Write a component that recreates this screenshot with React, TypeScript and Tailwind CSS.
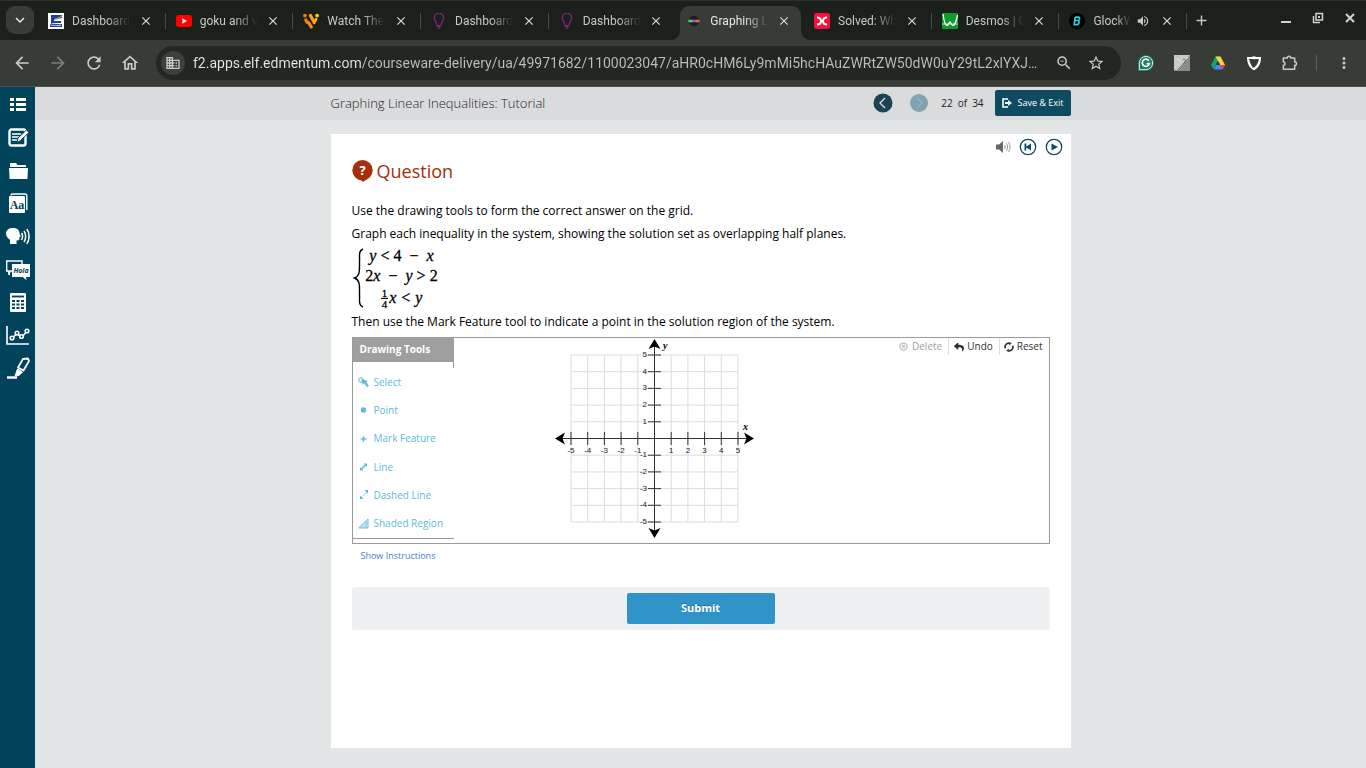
import { useState, type ReactNode } from 'react';
import clsx from 'clsx';
import { MdArrowBack, MdArrowForward, MdClose, MdMoreVert, MdRefresh, MdStarOutline, MdVolumeUp, MdDomain, MdOutlineHome, MdZoomOut, MdAdd, MdExpandMore } from 'react-icons/md';
import { FaReply } from 'react-icons/fa';

interface Tab {
  title: string;
  icon: ReactNode;
  audio?: boolean;
}

function BulbIcon() {
  return (
    <svg className="w-4 h-4" viewBox="0 0 16 16" fill="none" stroke="#7b2a78" strokeWidth="1.2">
      <path d="M6 12.5V11C5.800 9 3.200 8 3.200 5a4.800 4.800 0 0 1 9.600 0c0 3-2.600 4-2.800 6v1.500z" />
      <path d="M6.300 12.800h3.400v1.400H8.800v1.300H7.200v-1.300h-.9z" fill="#7b2a78" strokeWidth="0.500" />
    </svg>
  );
}

const tabs: Tab[] = [
  {
    title: 'Dashboard',
    icon: (
      <svg className="w-4 h-4" viewBox="0 0 16 16">
        <rect width="16" height="16" fill="#fff" />
        <path d="M3 2h11v3L8 6.500H6V8h7v2H5L3 11z" fill="#1d3f9c" />
        <path d="M2 11.500c4-2 8 .5 12-.5v3H2z" fill="#1d3f9c" />
        <path d="M7 6c2-.3 5-1.500 7-3" stroke="#e8c33a" strokeWidth="1" fill="none" />
        <path d="M3 12.500c3-.8 6 .6 10 0" stroke="#fff" strokeWidth=".7" fill="none" />
      </svg>
    ),
  },
  {
    title: 'goku and v',
    icon: (
      <svg className="w-4 h-4" viewBox="0 0 16 16">
        <rect y="2" width="16" height="12" rx="3" fill="#f00" />
        <path d="M6.300 5.300v5.400L11 8z" fill="#fff" />
      </svg>
    ),
  },
  {
    title: 'Watch The',
    icon: (
      <svg className="w-4 h-4" viewBox="0 0 16 16" strokeLinecap="round" fill="none" strokeWidth="3.200">
        <path d="M2.800 7 4 9.200" stroke="#f47a20" />
        <path d="M5.500 9.500 8.300 14" stroke="#f58a1f" />
        <path d="M7.500 2.500 11.200 9.500" stroke="#f9a11b" />
        <path d="M13 6.300l-.8 1.700" stroke="#fbb51a" strokeWidth="2.800" />
        <circle cx="1.900" cy="2.600" r="1.900" fill="#f47a20" />
        <circle cx="14.100" cy="2.600" r="1.900" fill="#fdd20a" />
      </svg>
    ),
  },
  { title: 'Dashboard', icon: <BulbIcon /> },
  { title: 'Dashboard', icon: <BulbIcon /> },
  {
    title: 'Graphing L',
    icon: (
      <svg className="w-4 h-4" viewBox="0 0 16 16">
        <circle cx="8" cy="8" r="5.300" fill="#1d1d1d" />
        <rect x="2.500" y="6.700" width="2.500" height="2.600" fill="#6fcf4f" />
        <rect x="5" y="6.700" width="2.500" height="2.600" fill="#35b6d8" />
        <rect x="7.500" y="6.700" width="2.500" height="2.600" fill="#b04bc0" />
        <rect x="10" y="6.700" width="3.500" height="2.600" fill="#ee6a3b" />
      </svg>
    ),
  },
  {
    title: 'Solved: Wh',
    icon: (
      <svg className="w-4 h-4" viewBox="0 0 16 16">
        <rect width="16" height="16" rx="2.500" fill="#f5103e" />
        <path d="M3 4.500c3.600 0 4 1.500 4 3.500s-.4 3.500-4 3.500M13 4.500c-3.600 0-4 1.500-4 3.500s.4 3.500 4 3.500M6 8h4" fill="none" stroke="#fff" strokeWidth="2" />
      </svg>
    ),
  },
  {
    title: 'Desmos | G',
    icon: (
      <svg className="w-4 h-4" viewBox="0 0 16 16">
        <rect width="16" height="16" rx="1" fill="#0e9a2e" />
        <path d="M0 11h16" stroke="#cfeed4" strokeWidth=".9" />
        <path d="M1 1c1 7 2.500 11.500 4 11.500S7 9 8 9s1.500 3.500 3 3.500S14.500 8 15.500 2" fill="none" stroke="#fff" strokeWidth="1.300" />
      </svg>
    ),
  },
  {
    title: 'GlockW',
    audio: true,
    icon: (
      <svg className="w-4 h-4" viewBox="0 0 16 16">
        <circle cx="8" cy="8" r="8" fill="#000" />
        <path d="M6.200 4.200h3.300c1.600 0 1.500 3-.5 3.300H6.500M9 7.500c1.800.5 1.200 4.200-1.200 4.200H5.200l1-7.500" fill="none" stroke="#22d3e6" strokeWidth="1.700" />
      </svg>
    ),
  },
];

function TabStrip() {
  const [active, setActive] = useState(5);
  return (
    <div className="flex h-10 bg-[#1c201b] text-[#c5c9c0] border-t border-[#2b302a]">
      <div className="w-[38px] pl-[6px] pt-[5px]">
        <button aria-label="Search tabs" className="flex items-center justify-center w-7 h-7 rounded-[9px] bg-[#383c36] text-[#e4e7df]">
          <MdExpandMore size={18} />
        </button>
      </div>
      <div className="flex flex-1">
        {tabs.map((tab, i) => (
          <div key={i} className="relative flex-1 min-w-0 pt-[5px]">
            {i === active && (
              <svg className="absolute left-[-6px] top-[5px] w-[142px] h-[34px]" viewBox="0 0 142 34" aria-hidden="true">
                <path d="M0 34c7 0 10-4 10-10V10C10 4 14 0 20 0h101c6 0 10 4 10 10v14c0 6 4 10 11 10z" fill="#383c36" />
              </svg>
            )}
            <div className="relative flex items-center h-[29px] pl-[10px] pr-[13px]">
              <button onClick={() => setActive(i)} className="flex flex-1 min-w-0 items-center gap-2 text-left">
                <span className="shrink-0">{tab.icon}</span>
                <span className={clsx('overflow-hidden whitespace-nowrap text-xs leading-4 [mask-image:linear-gradient(to_right,#000_60%,transparent)]', tab.audio ? 'w-[38px]' : 'w-[58px]', i === active && 'text-[#e4e7df]')}>
                  {tab.title}
                </span>
              </button>
              {tab.audio && <MdVolumeUp size={14} className="mr-[10px]" />}
              <button aria-label="Close tab" className="shrink-0 text-[#dadfd5]">
                <MdClose size={14} />
              </button>
            </div>
            {i !== active && i !== active - 1 && <span className="absolute right-0 top-3 w-px h-4 bg-[#454a43]" />}
          </div>
        ))}
      </div>
      <div className="flex w-[179px] justify-between pl-[6px] pr-[9px]">
        <button aria-label="New tab" className="h-[38px]">
          <MdAdd size={17} />
        </button>
        <div className="flex h-[33px] items-center gap-[18px] text-[#d0d5ca]">
          <button aria-label="Minimise">
            <svg className="w-[14px] h-[14px]" viewBox="0 0 14 14"><path d="M2 11h10" stroke="currentColor" strokeWidth="2" /></svg>
          </button>
          <button aria-label="Restore">
            <svg className="w-[14px] h-[14px]" viewBox="0 0 14 14" fill="none" stroke="currentColor" strokeWidth="1.500">
              <path d="M5 2.500h6.500V9H5zM2.500 5v6.500H9" />
              <path d="M7 5h2v2H7z" fill="currentColor" strokeWidth="0" />
            </svg>
          </button>
          <button aria-label="Close">
            <svg className="w-[14px] h-[14px]" viewBox="0 0 14 14"><path d="M3 3l8 8M11 3l-8 8" stroke="currentColor" strokeWidth="2" /></svg>
          </button>
        </div>
      </div>
    </div>
  );
}

const extensions: { name: string; icon: ReactNode }[] = [
  {
    name: 'Grammarly',
    icon: (
      <svg className="w-4 h-4" viewBox="0 0 16 16">
        <path d="M0 16V8a8 8 0 1 1 8 8z" fill="#1f7a68" />
        <path d="M1.400 14.600V8a6.600 6.600 0 1 1 6.600 6.600z" fill="none" stroke="#e6f2ef" strokeWidth=".9" />
        <path d="M10.800 5.700A3.600 3.600 0 1 0 11.400 8.600H8.500" fill="none" stroke="#fff" strokeWidth="1.700" />
      </svg>
    ),
  },
  {
    name: 'Highlighter',
    icon: (
      <svg className="w-4 h-4" viewBox="0 0 16 16">
        <rect width="16" height="16" fill="#8b8d8a" />
        <path d="M0 0h16L0 16z" fill="#c9cac8" />
        <path d="M3 4c2 0 3 3 4 3M2 15 14 2" fill="none" stroke="#eee" />
        <path d="M9 5c1-1.500 3-.5 2.500 1S9.500 8 10 9" stroke="#666" fill="none" />
      </svg>
    ),
  },
  {
    name: 'Google Drive',
    icon: (
      <svg className="w-4 h-4" viewBox="0 0 16 16">
        <path d="M5.500 1.500h5L8 6 3.500 14 1 10z" fill="#11a861" />
        <path d="M5.500 1.500h5L15 10h-5z" fill="#ffcf48" />
        <path d="M3.500 14.500 6 10h9l-2.500 4.500z" fill="#4687f4" />
        <path d="M12.500 14.500 10.500 10H15z" fill="#ea4335" />
        <path d="M8 6 5.800 10h4.400z" fill="#383c36" />
      </svg>
    ),
  },
  {
    name: 'Shield',
    icon: (
      <svg className="w-4 h-4" viewBox="0 0 16 16" fill="none">
        <path d="M8 1.200c2.500.8 4.500 1 7 .8 0 6-2 11-7 13.300C3 13 1 8 1 2c2.500.2 4.500 0 7-.8z" fill="#fff" />
        <path d="M3.500 4c3 .2 6 .2 9.300 0-.5 4-2 6.500-4.800 8.700C5.200 10.500 3.800 7.500 3.500 4z" fill="#383c36" />
        <path d="M3 3.500 7 13" stroke="#383c36" strokeWidth=".7" />
      </svg>
    ),
  },
  {
    name: 'Extensions',
    icon: (
      <svg className="w-[18px] h-[18px]" viewBox="0 0 18 18">
        <path d="M2.500 3.800h4.200c0-2.600 3.600-2.600 3.600 0h4.200v4.100c2.600 0 2.600 3.600 0 3.600v4.200h-12v-4.200c2.400 0 2.400-3.600 0-3.600z" fill="none" stroke="currentColor" strokeWidth="1.600" strokeLinejoin="round" />
      </svg>
    ),
  },
];

function Toolbar() {
  return (
    <div className="flex items-center h-[47px] bg-[#383c36] text-[#c8ccc3] border-b border-[#50544e] pl-3 pr-[13px]">
      <div className="flex items-center gap-4">
        <button aria-label="Back"><MdArrowBack size={20} /></button>
        <button aria-label="Forward" className="text-[#7b7f77]"><MdArrowForward size={20} /></button>
        <button aria-label="Reload"><MdRefresh size={20} /></button>
        <button aria-label="Home"><MdOutlineHome size={20} /></button>
      </div>
      <div className="flex flex-1 items-center h-[34px] ml-4 pl-[5px] pr-4 rounded-full bg-[#232722]">
        <button aria-label="Site information" className="flex items-center justify-center w-6 h-6 rounded-full bg-[#3c403a]">
          <MdDomain size={16} />
        </button>
        <input
          aria-label="Address"
          className="flex-1 min-w-0 mx-2 text-sm leading-5 outline-none text-transparent bg-clip-text bg-[linear-gradient(to_right,#e6e9e2_169px,#bcc0b8_169px)]"
          defaultValue="f2.apps.elf.edmentum.com/courseware-delivery/ua/49971682/1100023047/aHR0cHM6Ly9mMi5hcHAuZWRtZW50dW0uY29tL2xlYXJ…"
        />
        <div className="flex gap-[14px]">
          <button aria-label="Zoom"><MdZoomOut size={18} /></button>
          <button aria-label="Bookmark"><MdStarOutline size={18} /></button>
        </div>
      </div>
      <div className="flex items-center ml-4 gap-[19px]">
        {extensions.map((ext) => (
          <button key={ext.name} aria-label={ext.name} className="flex items-center justify-center w-[17px] h-5">
            {ext.icon}
          </button>
        ))}
      </div>
      <span className="w-px h-4 mx-[18px] bg-[#5b5f58]" />
      <button aria-label="Menu"><MdMoreVert size={18} /></button>
    </div>
  );
}

const sideTools: { name: string; icon: ReactNode }[] = [
  {
    name: 'Contents',
    icon: <path d="M4 6h4v3H4zM10 6h10v3H10zM4 11h4v3H4zM10 11h10v3H10zM4 16h4v3H4zM10 16h10v3H10z" fill="#fff" />,
  },
  {
    name: 'Notebook',
    icon: (
      <g fill="none" stroke="#fff">
        <rect x="3.500" y="4.500" width="16" height="16" rx="2" strokeWidth="2.400" />
        <path d="M6 9h9M6 12h7M6 15h5" strokeWidth="1.400" />
        <path d="M11 17.500l1-4.500 8.500-8 2.500 2.500-8.500 8z" fill="#fff" stroke="#00435a" />
      </g>
    ),
  },
  {
    name: 'Files',
    icon: <path d="M4 8V6c0-.6.4-1 1-1h5l1.500 2H19c.6 0 1 .4 1 1v1H4zM3 10h19l-.6 11H3.600z" fill="#fff" />,
  },
  {
    name: 'Dictionary',
    icon: (
      <>
        <path d="M5 4.500C5 3.500 5.500 3 6.500 3H19c1 0 1.800.8 1.800 1.800V19" fill="none" stroke="#fff" strokeWidth="1.400" />
        <rect x="3" y="5" width="16" height="17" rx="1" fill="#fff" />
        <text x="11" y="18" textAnchor="middle" fontSize="12" fontWeight="700" fontFamily="Liberation Serif, serif" fill="#00435a">Aa</text>
      </>
    ),
  },
  {
    name: 'Read aloud',
    icon: (
      <>
        <path d="M7 4c4-.3 6.500 2 6.500 5.500l1.300 3-1.300.6-.2 3-2.800.4V20H4v-4.200C1.500 14 0 12 0 9.500 0 6 3 4 7 4z" fill="#fff" />
        <path d="M15.500 9c1.400 2 1.400 4.500 0 7M18 7c2.200 3 2.200 8 0 11M20.800 5c3 4 3 11 0 15" fill="none" stroke="#fff" strokeWidth="1.500" />
      </>
    ),
  },
  {
    name: 'Translate',
    icon: (
      <>
        <path d="M6 14H4l-1 4-.5-4H.700V4H16v3" fill="none" stroke="#fff" strokeWidth="1.400" />
        <path d="M6 7h18v13h-4l.5 3-4-3H6z" fill="#fff" />
        <text x="15" y="16" textAnchor="middle" fontSize="7" fontWeight="700" fontStyle="italic" fontFamily="Open Sans, sans-serif" fill="#00435a">Hola</text>
      </>
    ),
  },
  {
    name: 'Calculator',
    icon: (
      <>
        <rect x="4" y="3" width="16" height="19" rx="1" fill="#fff" />
        <path d="M6 6.500h12" stroke="#00435a" strokeWidth="1.800" />
        <path d="M6 11h12M6 14.500h12M6 18h12" stroke="#00435a" strokeWidth="2.200" strokeDasharray="3 1.500" />
      </>
    ),
  },
  {
    name: 'Graphing',
    icon: (
      <g fill="none" stroke="#fff" strokeWidth="1.600">
        <path d="M1 3v18h22M6 15l5-4 5 3 5-6" />
        <g fill="#00435a">
          <circle cx="6" cy="15" r="1.800" />
          <circle cx="11" cy="10" r="1.800" />
          <circle cx="15.500" cy="13.500" r="1.800" />
          <circle cx="21" cy="8" r="1.800" />
        </g>
      </g>
    ),
  },
  {
    name: 'Highlighter',
    icon: (
      <g fill="none" stroke="#fff" strokeWidth="1.800" strokeLinejoin="round">
        <path d="M17 3l5-.5 1 2.500-5.500 9.500-5.500-3z" />
        <path d="M11.500 13l5 3-3.500 3.500L9 20z" fill="#fff" strokeWidth="1" />
        <path d="M1 21.500h10" strokeWidth="2.400" />
      </g>
    ),
  },
];

function Sidebar() {
  return (
    <nav aria-label="Course tools" className="w-[35px] shrink-0 bg-[#00435a]">
      <div className="grid grid-rows-9 h-[297px] justify-items-center items-center">
        {sideTools.map((tool) => (
          <button key={tool.name} aria-label={tool.name}>
            <svg className="w-6 h-6" viewBox="0 0 24 24">{tool.icon}</svg>
          </button>
        ))}
      </div>
    </nav>
  );
}

function LessonHeader() {
  return (
    <header className="h-[33px] bg-[#d9dbdd]">
      <div className="flex items-center max-w-[740px] h-8 mx-auto">
        <h1 className="text-[13px] leading-5 font-light text-[#22282b]">Graphing Linear Inequalities: Tutorial</h1>
        <div className="flex items-center ml-auto">
          <button aria-label="Previous page">
            <svg className="w-5 h-5" viewBox="0 0 20 20">
              <circle cx="10" cy="10" r="9.500" fill="#1c4354" />
              <path d="M12 5l-5 5 5 5" fill="none" stroke="#d9e2e6" strokeWidth="1.300" />
            </svg>
          </button>
          <button aria-label="Next page" className="ml-4">
            <svg className="w-5 h-5" viewBox="0 0 20 20">
              <circle cx="10" cy="10" r="9" fill="#80a3b1" />
              <path d="M8.500 5l4.500 5-4.500 5" fill="none" stroke="#95b3bf" strokeWidth="1.300" />
            </svg>
          </button>
          <p className="flex gap-[5px] ml-3 text-[10px] leading-4 text-[#222]">
            <span>22</span>
            <span>of</span>
            <span>34</span>
          </p>
          <button className="flex items-center gap-[6px] h-[26px] ml-[11px] px-[7px] rounded-[2px] bg-[#0f4b60] text-white text-[9px]">
            <svg className="w-[10px] h-[10px]" viewBox="0 0 10 10">
              <path d="M6 1H1v8h5" fill="none" stroke="#fff" strokeWidth="1.600" />
              <path d="M3 4h3V2l4 3-4 3V6H3z" fill="#fff" />
            </svg>
            Save &amp; Exit
          </button>
        </div>
      </div>
    </header>
  );
}

function InequalitySystem() {
  return (
    <div className="flex items-center h-[65px] text-black">
      <svg className="w-3 h-[60px]" viewBox="0 0 12 60" aria-hidden="true">
        <path d="M11 1C6 3 8 8 7.500 14c0 8 .8 14-5 16 5.800 2 5 8 5 16 .5 6-1.500 11 3.500 13" fill="none" stroke="#000" strokeWidth="1.400" />
      </svg>
      <div className="flex flex-col items-center w-[76px] pt-px font-['Liberation_Serif',serif] text-base leading-5 whitespace-pre [-webkit-text-stroke:0.300px_#000]">
        <div><i>y</i> &lt; 4  −  <i>x</i></div>
        <div>2<i>x</i>  −  <i>y</i> &gt; 2</div>
        <div className="flex items-center gap-px h-[25px]">
          <span className="flex flex-col text-[11px] leading-[10px]">
            <span className="border-b border-black px-px">1</span>
            <span className="px-px">4</span>
          </span>
          <span className="flex gap-[5px]"><i>x</i><span>&lt;</span><i>y</i></span>
        </div>
      </div>
    </div>
  );
}

const drawingTools: { name: string; icon: ReactNode }[] = [
  {
    name: 'Select',
    icon: (
      <>
        <circle cx="3" cy="4" r="2.300" fill="none" stroke="currentColor" />
        <path d="M3 3l7 2-2 1 3 4-2 1-3-4-1 2z" fill="currentColor" />
      </>
    ),
  },
  { name: 'Point', icon: <circle cx="5.500" cy="6" r="2.700" fill="currentColor" /> },
  { name: 'Mark Feature', icon: <path d="M5.500 3l.8 2.200 2.200.8-2.200.8-.8 2.200-.8-2.200L2.500 6l2.200-.8z" fill="currentColor" stroke="currentColor" strokeWidth=".4" /> },
  {
    name: 'Line',
    icon: <path d="M5.500 2.500H9V6L7.800 4.800 4.300 8.300l1.200 1.200H2V6l1.200 1.200 3.500-3.500z" fill="currentColor" />,
  },
  {
    name: 'Dashed Line',
    icon: (
      <>
        <path d="M6.500 1H10v3.500zM2 6.500V10h3.500z" fill="currentColor" />
        <path d="M3 9l6-6" stroke="currentColor" strokeDasharray="1.500 1" />
      </>
    ),
  },
  {
    name: 'Shaded Region',
    icon: <path d="M1 9.500 10 1v9H1zM3 8v2M5 6v4M7 4v6M8.800 3v7" fill="none" stroke="currentColor" strokeWidth=".9" />,
  },
];

const ticks = [-5, -4, -3, -2, -1, 1, 2, 3, 4, 5];
const STEP = 16.7;
const ORIGIN = 100.5;

function CoordinateGrid() {
  const at = (n: number) => ORIGIN + n * STEP;
  return (
    <svg className="w-[204px] h-[205px] ml-[100px]" viewBox="0 0 204 205" fontFamily="Liberation Sans, sans-serif" fontSize="8" role="img" aria-label="Coordinate grid">
      {ticks.map((n) => (
        <g key={n}>
          <path d={`M${at(n)} ${at(-5)}V${at(5)}M${at(-5)} ${at(n)}H${at(5)}`} stroke="#dcdcdc" />
          <path d={`M${at(n)} 94V107M94 ${at(n)}H107`} stroke="#333" />
        </g>
      ))}
      <path d="M100.500 6V195M6 100.500H195" stroke="#333" />
      <path d="M100.500 1l6 10-6-2.500-6 2.500zM100.500 200l6-10-6 2.500-6-2.500zM1 100.500 11 94.500l-2.500 6 2.500 6zM200 100.500 190 94.500l2.500 6-2.500 6z" fill="#000" />
      {ticks.map((n) => (
        <g key={n} fill="#222">
          <text x={at(n)} y="115" textAnchor="middle">{n}</text>
          <text x="93" y={at(-n) + 2} textAnchor="end">{n}</text>
        </g>
      ))}
      <g fontFamily="Liberation Serif, serif" fontSize="10" fontWeight="700" fontStyle="italic">
        <text x="109" y="11">y</text>
        <text x="189" y="92">x</text>
      </g>
    </svg>
  );
}

function DrawingPanel() {
  return (
    <section className="flex mt-1 border border-[#9a9a9a]">
      <div className="w-[101px]">
        <h3 className="h-6 pl-[7px] bg-[#9f9f9f] text-white text-[10px] leading-[23px] font-bold">Drawing Tools</h3>
        <div className="h-[6px] border-r border-[#9a9a9a]" />
        <div className="grid grid-rows-6 h-[171px] border-b border-[#9a9a9a]">
          {drawingTools.map((tool) => (
            <button key={tool.name} className="flex items-center gap-[5px] pl-[5px] text-[10px] text-[#5bbcd6] whitespace-nowrap">
              <svg className="w-[11px] h-3" viewBox="0 0 11 12">{tool.icon}</svg>
              {tool.name}
            </button>
          ))}
        </div>
      </div>
      <CoordinateGrid />
      <div className="flex ml-auto h-[17px] text-[10px] text-[#333]">
        <button disabled className="flex items-center gap-1 pr-[6px] text-[#a0a0a0]">
          <svg className="w-[9px] h-[9px]" viewBox="0 0 9 9" fill="none" stroke="#c4c4c4">
            <circle cx="4.500" cy="4.500" r="3.600" strokeWidth="1.500" />
            <path d="M3 3l3 3M6 3 3 6" strokeWidth="1.200" />
          </svg>
          Delete
        </button>
        <button className="flex items-center gap-[3px] pl-[5px] pr-[6px] border-x border-[#ddd]">
          <FaReply size={10} />
          Undo
        </button>
        <button className="flex items-center gap-[3px] pl-1 pr-[6px]">
          <svg className="w-[10px] h-[10px]" viewBox="0 0 10 10" fill="none" stroke="currentColor" strokeWidth="1.700">
            <path d="M1.300 6.200A3.700 3.700 0 0 1 5.500 1.300M8.700 3.800a3.700 3.700 0 0 1-4.200 4.900" />
            <path d="M5.200 0v3.400L7.800 1.300zM4.800 10V6.600L2.200 8.700z" fill="currentColor" stroke="none" />
          </svg>
          Reset
        </button>
      </div>
    </section>
  );
}

function QuestionCard() {
  return (
    <main className="flex-1 w-full max-w-[740px] mx-auto mt-[14px] mb-5 px-[21px] bg-white">
      <div className="flex items-center justify-end gap-2 h-[25px] -mr-[13px]">
        <button aria-label="Read question">
          <svg className="w-4 h-4" viewBox="0 0 16 16">
            <path d="M1 5.500h3L8 2v12l-4-3.500H1z" fill="#666" />
            <path d="M9.500 6c.8 1 .8 3 0 4M11.500 4.500c1.500 2 1.500 5 0 7M13.500 3c2 3 2 7 0 10" fill="none" stroke="#999" />
          </svg>
        </button>
        <button aria-label="Restart audio">
          <svg className="w-[18px] h-[18px]" viewBox="0 0 18 18">
            <circle cx="9" cy="9" r="7.700" fill="none" stroke="#0f4b60" strokeWidth="1.300" />
            <path d="M5.500 5.500h1.800v3L12 5.500v7L7.300 9.500v3H5.500z" fill="#0f4b60" />
          </svg>
        </button>
        <button aria-label="Play audio">
          <svg className="w-[18px] h-[18px]" viewBox="0 0 18 18">
            <circle cx="9" cy="9" r="7.700" fill="none" stroke="#0f4b60" strokeWidth="1.300" />
            <path d="M6.500 5.500v7L13 9z" fill="#0f4b60" />
          </svg>
        </button>
      </div>
      <h2 className="flex items-center gap-1 h-6 text-lg text-[#a5300b]">
        <svg className="w-[21px] h-[22px]" viewBox="0 0 21 22" aria-hidden="true">
          <circle cx="10.500" cy="10.200" r="10.200" fill="#a5300b" />
          <path d="M8 19h7l-4 3z" fill="#a5300b" />
          <text x="10.500" y="15" textAnchor="middle" fontSize="13" fontWeight="700" fontFamily="Open Sans, sans-serif" fill="#fff">?</text>
        </svg>
        Question
      </h2>
      <div className="mt-4 text-xs leading-[23px] text-black">
        <p>Use the drawing tools to form the correct answer on the grid.</p>
        <p>Graph each inequality in the system, showing the solution set as overlapping half planes.</p>
        <InequalitySystem />
        <p>Then use the Mark Feature tool to indicate a point in the solution region of the system.</p>
      </div>
      <DrawingPanel />
      <a href="#instructions" className="block w-fit ml-[9px] text-[9px] leading-[23px] text-[#3f7fbf]">Show Instructions</a>
      <div className="flex justify-center items-center h-[43px] mt-5 rounded-[3px] bg-[#eef0f1]">
        <button className="w-[148px] h-[31px] rounded-[2px] bg-[#3094c8] text-white text-[11px] font-bold [text-shadow:0_-1px_0_#1f6c96]">Submit</button>
      </div>
    </main>
  );
}

export default function App() {
  return (
    <div className="flex flex-col min-h-screen">
      <div className="font-[Roboto,sans-serif]">
        <TabStrip />
        <Toolbar />
      </div>
      <div className="flex flex-1 bg-[#e2e6e7] font-['Open_Sans',sans-serif]">
        <Sidebar />
        <div className="flex flex-col flex-1 min-w-0">
          <LessonHeader />
          <QuestionCard />
        </div>
      </div>
    </div>
  );
}
